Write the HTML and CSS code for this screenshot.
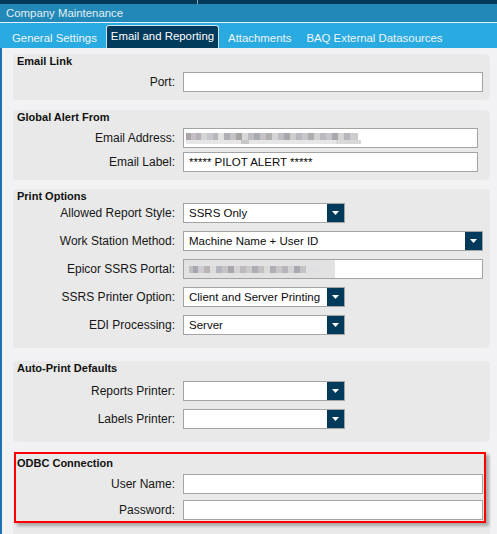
FILE: index.html
```html
<!DOCTYPE html>
<html>
<head>
<meta charset="utf-8">
<link rel="stylesheet" href="styles.css">
</head>
<body>
<div class="app">
  <div class="topstrip"><div class="topleft"></div></div>
  <div class="titlebar">Company Maintenance</div>
  <div class="tabs">
    <div class="tab t1">General Settings</div>
    <div class="tab active">Email and Reporting</div>
    <div class="tab t3">Attachments</div>
    <div class="tab t4">BAQ External Datasources</div>
  </div>
  <div class="content">
    <div class="group g-email">
      <div class="gtitle">Email Link</div>
      <div class="rows">
        <div class="label">Port:</div>
        <div class="field w300"></div>
      </div>
    </div>

    <div class="group g-alert">
      <div class="gtitle">Global Alert From</div>
      <div class="rows">
        <div class="label">Email Address:</div>
        <div class="field w295"><div class="blur blur-email"></div><div class="blur-under"></div></div>
        <div class="label">Email Label:</div>
        <div class="field w295"><span class="val">***** PILOT ALERT *****</span></div>
      </div>
    </div>

    <div class="group g-print">
      <div class="gtitle">Print Options</div>
      <div class="rows">
        <div class="label">Allowed Report Style:</div>
        <div class="field combo w162"><span class="val">SSRS Only</span><span class="btn"><svg width="7" height="4" viewBox="0 0 7 4"><polygon points="0,0 7,0 3.5,4" fill="#fff"/></svg></span></div>
        <div class="label">Work Station Method:</div>
        <div class="field combo w300"><span class="val">Machine Name + User ID</span><span class="btn"><svg width="7" height="4" viewBox="0 0 7 4"><polygon points="0,0 7,0 3.5,4" fill="#fff"/></svg></span></div>
        <div class="label">Epicor SSRS Portal:</div>
        <div class="field w300 portal"><div class="portal-cover"><div class="blur blur-portal"></div></div></div>
        <div class="label">SSRS Printer Option:</div>
        <div class="field combo w162"><span class="val">Client and Server Printing</span><span class="btn"><svg width="7" height="4" viewBox="0 0 7 4"><polygon points="0,0 7,0 3.5,4" fill="#fff"/></svg></span></div>
        <div class="label">EDI Processing:</div>
        <div class="field combo w162"><span class="val">Server</span><span class="btn"><svg width="7" height="4" viewBox="0 0 7 4"><polygon points="0,0 7,0 3.5,4" fill="#fff"/></svg></span></div>
      </div>
    </div>

    <div class="group g-auto">
      <div class="gtitle">Auto-Print Defaults</div>
      <div class="rows">
        <div class="label">Reports Printer:</div>
        <div class="field combo w162"><span class="val"></span><span class="btn"><svg width="7" height="4" viewBox="0 0 7 4"><polygon points="0,0 7,0 3.5,4" fill="#fff"/></svg></span></div>
        <div class="label">Labels Printer:</div>
        <div class="field combo w162"><span class="val"></span><span class="btn"><svg width="7" height="4" viewBox="0 0 7 4"><polygon points="0,0 7,0 3.5,4" fill="#fff"/></svg></span></div>
      </div>
    </div>

    <div class="group g-odbc">
      <div class="gtitle">ODBC Connection</div>
      <div class="rows">
        <div class="label">User Name:</div>
        <div class="field w300"></div>
        <div class="label">Password:</div>
        <div class="field w300"></div>
      </div>
      <div class="highlight"></div>
    </div>
  </div>
</div>
</body>
</html>
```

FILE: styles.css
```css
html, body {
  margin: 0;
  padding: 0;
  width: 497px;
  height: 534px;
  overflow: hidden;
  font-family: "Liberation Sans", Arial, sans-serif;
}
.app {
  width: 497px;
  height: 534px;
  display: flex;
  flex-direction: column;
  background: #f2f2f4;
}
.topstrip {
  height: 4px;
  background: #033a5a;
  flex: none;
}
.topleft {
  width: 197px;
  height: 4px;
  border-right: 1px solid #8fa6b6;
}
.titlebar {
  height: 18px;
  line-height: 18px;
  background: #2188b7;
  color: #e3eff6;
  font-size: 11.4px;
  padding-left: 6px;
  border-bottom: 1px solid #e4f1f8;
  flex: none;
}
.tabs {
  height: 25px;
  background: #29aae1;
  display: flex;
  align-items: flex-end;
  padding-left: 6px;
  flex: none;
}
.tab {
  color: #eef6fb;
  font-size: 11.4px;
  height: 23px;
  line-height: 23px;
  padding: 0 6px;
  box-sizing: border-box;
  padding-top: 2px;
}
.tab.active {
  background: #023a5c;
  border: 1px solid #cfe4f0;
  border-bottom: none;
  border-radius: 3px 3px 0 0;
  padding: 0 4px 0 4px;
  line-height: 20px;
  margin-left: 3px;
  color: #ffffff;
}
.tab.t3 {
  margin-left: 3px;
}
.tab.t4 {
  margin-left: 3px;
}
.content {
  flex: 1;
  background: #f2f2f4;
  border-left: 2px solid #1f72b3;
  padding: 6px 7px 0 11px;
  display: flex;
  flex-direction: column;
}
.group {
  background: #e9e9e9;
  border-radius: 4px;
  position: relative;
  flex: none;
}
.gtitle {
  height: 14px;
  line-height: 14px;
  font-size: 11px;
  font-weight: bold;
  color: #111;
  padding-left: 4px;
}
.rows {
  display: grid;
  grid-template-columns: 162px auto;
  column-gap: 8px;
  align-items: center;
}
.label {
  text-align: right;
  font-size: 12px;
  color: #161616;
  height: 20px;
  line-height: 20px;
}
.field {
  height: 20px;
  box-sizing: border-box;
  border: 1px solid #a3a3a3;
  background: #fff;
  display: flex;
  align-items: center;
  position: relative;
  overflow: hidden;
}
.w300 { width: 300px; }
.w295 { width: 295px; }
.w162 { width: 162px; }
.val {
  flex: 1;
  font-size: 11.5px;
  color: #0c0c0c;
  padding-left: 5px;
  white-space: nowrap;
  overflow: hidden;
}
.combo .btn {
  width: 17px;
  height: 18px;
  background: #023a5c;
  display: flex;
  align-items: center;
  justify-content: center;
  flex: none;
}
.g-email { padding-bottom: 8px; }
.g-email .rows { margin-top: 4px; }
.g-alert { margin-top: 10px; padding-bottom: 8px; }
.g-alert .rows { margin-top: 4px; row-gap: 4px; }
.g-print { margin-top: 9px; padding-bottom: 13px; }
.g-print .rows { row-gap: 8px; }
.g-auto { margin-top: 13px; padding-bottom: 13px; }
.g-auto .rows { margin-top: 6px; row-gap: 8px; }
.g-odbc { margin-top: 10px; padding-top: 4px; padding-bottom: 20px; }
.g-odbc .rows { margin-top: 4px; row-gap: 6px; }

.blur {
  height: 7px;
}
.blur-email {
  position: absolute;
  left: 2px;
  top: 4px;
  width: 172px;
  background: linear-gradient(90deg,
    #a9a3aa 0 5px, #c4bec4 5px 10px, #b4b1b8 10px 15px, #d6d4d6 15px 21px,
    #c9c6cb 21px 27px, #b7b6bd 27px 32px, #e2e2e2 32px 38px, #aeb2b8 38px 44px,
    #c6c3c4 44px 50px, #a7a3a7 50px 56px, #d8d8da 56px 62px, #bcbcc2 62px 68px,
    #a9abb2 68px 74px, #c5c1c4 74px 80px, #b2afb3 80px 86px, #d4d4d6 86px 92px,
    #bdbdc4 92px 98px, #a8a5ab 98px 104px, #cfcccf 104px 110px, #b8b8be 110px 116px,
    #c8c7ca 116px 122px, #aeacb1 122px 128px, #d2d0d3 128px 134px, #bbb9bd 134px 140px,
    #c7c6cb 140px 146px, #aaa7ad 146px 152px, #d5d3d6 152px 158px, #b8b6ba 158px 164px,
    #cdcdd0 164px 172px);
}
.blur-under {
  position: absolute;
  left: 2px;
  top: 11px;
  width: 175px;
  height: 4px;
  background: linear-gradient(90deg, #e6e6e6 0 55px, #c8c8c8 55px 63px, #e6e6e6 63px 150px, #d8d8d8 150px 175px);
}
.portal-cover {
  position: absolute;
  left: -2px;
  top: -1px;
  width: 153px;
  height: 20px;
  background: #e2e2e2;
}
.blur-portal {
  position: absolute;
  left: 7px;
  top: 7px;
  width: 131px;
  background: linear-gradient(90deg,
    #c2bdc3 0 4px, #a8a6b0 4px 9px, #cfcbd0 9px 15px, #b9b3b6 15px 21px,
    #dcdcde 21px 27px, #b5b3bc 27px 33px, #c8c4c6 33px 39px, #a9a6ae 39px 45px,
    #d3d1d4 45px 51px, #bdb9bf 51px 57px, #cacaca 57px 63px, #aeacb4 63px 69px,
    #c4c0c3 69px 75px, #dadada 75px 81px, #b0adb4 81px 87px, #c9c6c9 87px 93px,
    #b7b5bb 93px 99px, #d4d2d5 99px 105px, #aaa8b0 105px 111px, #c5c2c6 111px 117px,
    #e0e0e2 117px 131px);
}
.highlight {
  position: absolute;
  left: 1px;
  top: 0;
  width: 472px;
  height: 71px;
  box-sizing: border-box;
  border: 2px solid #fe0000;
  box-shadow: 3px 3px 3px rgba(0, 0, 0, 0.28);
  pointer-events: none;
}
```
